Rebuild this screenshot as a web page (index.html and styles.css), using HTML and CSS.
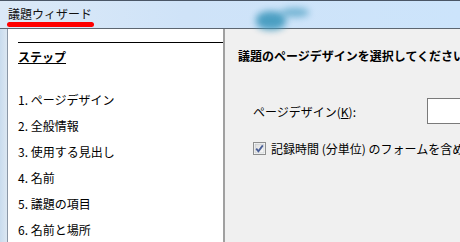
FILE: index.html
```html
<!DOCTYPE html>
<html lang="ja">
<head>
<meta charset="utf-8">
<title>議題ウィザード</title>
<link rel="stylesheet" href="styles.css">
</head>
<body>
<div class="window">
  <div class="titlebar">
    <span class="title">議題ウィザード</span>
    <span class="blur blur-a"></span>
    <span class="blur blur-b"></span>
    <span class="redmark"></span>
  </div>
  <div class="body">
    <div class="frame"></div>
    <div class="steps">
      <div class="rule"></div>
      <div class="steps-head">ステップ</div>
      <ol class="step-list">
        <li>1. ページデザイン</li>
        <li>2. 全般情報</li>
        <li>3. 使用する見出し</li>
        <li>4. 名前</li>
        <li>5. 議題の項目</li>
        <li>6. 名前と場所</li>
      </ol>
    </div>
    <div class="content">
      <div class="content-head">議題のページデザインを選択してください</div>
      <div class="field">
        <span class="label">ページデザイン(<u>K</u>):</span>
        <span class="input"></span>
      </div>
      <div class="check">
        <svg class="cb" width="13" height="13" viewBox="0 0 13 13">
          <defs>
            <linearGradient id="g" x1="0" y1="0" x2="1" y2="1">
              <stop offset="0" stop-color="#dcdcdc"/>
              <stop offset="1" stop-color="#fbfbfb"/>
            </linearGradient>
          </defs>
          <rect x="0.5" y="0.5" width="12" height="12" fill="#fff" stroke="#8e8f8f"/>
          <rect x="2" y="2" width="9" height="9" fill="url(#g)" stroke="#b9bec4" stroke-width="0.6"/>
          <path d="M3.2 6.6 L5.4 9.2 L9.8 3.4" fill="none" stroke="#4a5f97" stroke-width="1.8"/>
        </svg>
        <span>記録時間 (分単位) のフォームを含める</span>
      </div>
    </div>
  </div>
</div>
</body>
</html>
```

FILE: styles.css
```css
* { box-sizing: border-box; }
html, body {
  margin: 0;
  padding: 0;
  width: 460px;
  height: 242px;
  overflow: hidden;
  font-family: "Noto Sans CJK JP", "Noto Sans", sans-serif;
  font-size: 12px;
  color: #000;
  background: #f0f0f0;
}
.window {
  width: 460px;
  height: 242px;
  display: flex;
  flex-direction: column;
}
.titlebar {
  position: relative;
  height: 29px;
  flex: none;
  border-top: 1px solid #4a5666;
  border-bottom: 1px solid #5d6670;
  background: linear-gradient(to right, #dbe9f7 0%, #cfe3f8 40%, #cce4fb 100%);
  display: flex;
  align-items: center;
  padding-left: 8px;
  padding-bottom: 1px;
}
.title {
  font-size: 12px;
  line-height: 14px;
  color: #111;
}
.blur {
  position: absolute;
  background: #3e98bd;
  border-radius: 45%;
  filter: blur(3.5px);
  opacity: 0.9;
}
.blur-a { left: 256px; top: 10px; width: 30px; height: 19px; }
.blur-b { left: 281px; top: 7px; width: 28px; height: 9px; opacity: 0.65; }
.redmark {
  position: absolute;
  left: 7px;
  top: 21px;
  width: 87px;
  height: 5px;
  border-radius: 3px;
  background: #ff0000;
}
.body {
  flex: 1;
  display: flex;
  min-height: 0;
}
.frame {
  width: 8px;
  flex: none;
  background: linear-gradient(to right, #c9dcee, #dbe7f2);
  border-right: 1px solid #8a97a6;
}
.steps {
  width: 217px;
  flex: none;
  background: #fff;
  border-right: 2px solid #a0a0a0;
  padding-top: 13px;
  padding-left: 10px;
}
.rule {
  height: 1px;
  background: #000;
}
.steps-head {
  font-weight: bold;
  text-decoration: underline;
  line-height: 28px;
  margin-bottom: 16px;
}
.step-list {
  list-style: none;
  margin: 0;
  padding: 0;
}
.step-list li {
  line-height: 26px;
  height: 26px;
}
.content {
  flex: 1;
  padding-top: 15px;
  padding-left: 13px;
  white-space: nowrap;
  overflow: hidden;
}
.content-head {
  font-weight: bold;
  line-height: 24px;
}
.field {
  margin-top: 30px;
  padding-left: 15px;
  display: flex;
  align-items: center;
  height: 26px;
}
.label {
  width: 174px;
  flex: none;
}
.input {
  width: 100px;
  height: 26px;
  flex: none;
  background: #fff;
  border: 1px solid #7a7a7a;
}
.check {
  margin-top: 12px;
  padding-left: 15px;
  display: flex;
  align-items: center;
  gap: 5px;
  height: 24px;
}
.cb { flex: none; }
```
